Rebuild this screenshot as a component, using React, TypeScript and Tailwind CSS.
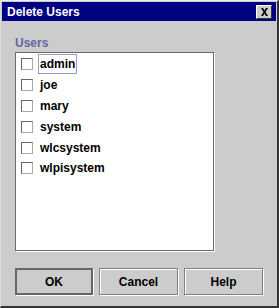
const users = ['admin', 'joe', 'mary', 'system', 'wlcsystem', 'wlpisystem'];

function Button({ label, isDefault }: { label: string; isDefault?: boolean }) {
  return (
    <button
      className={`h-[27px] flex items-center justify-center bg-[#cccccc] text-[12px] font-bold text-black ${
        isDefault
          ? 'w-[78px] border-2 border-[#666666] shadow-[1px_1px_0_#ffffff]'
          : 'w-[79px] border border-[#808080] shadow-[inset_1px_1px_0_#ffffff,1px_1px_0_#ffffff]'
      }`}
    >
      {label}
    </button>
  );
}

export default function App() {
  return (
    <div
      className="w-[279px] h-[308px] bg-[#cccccc] border-t border-l border-t-[#eeeeee] border-l-[#dddddd] border-r-2 border-b-2 border-r-[#333333] border-b-[#333333] flex flex-col"
      style={{ fontFamily: '"Liberation Sans", Arial, sans-serif' }}
    >
      <div className="mx-[1px] mt-[1px] h-[19px] bg-[#000080] flex items-center justify-between pl-[5px] pr-[4px]">
        <span className="text-white text-[12px] font-bold leading-none">Delete Users</span>
        <div className="w-[16px] h-[14px] bg-[#cccccc] border border-t-white border-l-white border-r-[#333333] border-b-[#333333] flex items-center justify-center">
          <svg width="9" height="8" viewBox="0 0 9 8">
            <path d="M1 0h2l1.5 2.5L6 0h2L5.5 4 8 8H6L4.5 5.5 3 8H1l2.5-4z" fill="#000" />
          </svg>
        </div>
      </div>

      <div className="pl-[14px] pt-[15px] flex flex-col">
        <div className="text-[12px] font-bold text-[#6666a0] leading-[14px] h-[14px]">Users</div>
        <div className="mt-[2px] w-[199px] h-[199px] bg-white border border-[#6a6a6a] shadow-[1px_1px_0_#ffffff] pt-[1px]">
          {users.map((u, i) => (
            <div key={u} className="h-[20.8px] flex items-center pl-[5px]">
              <div className="w-[12px] h-[12px] bg-white border border-t-[#666666] border-l-[#666666] border-r-[#aaaaaa] border-b-[#aaaaaa]" />
              <span
                className={`ml-[5px] text-[12px] font-bold text-black leading-none px-[1px] py-[3px] ${
                  i === 0 ? 'border border-[#9999cc]' : 'border border-transparent'
                }`}
              >
                {u}
              </span>
            </div>
          ))}
        </div>
      </div>

      <div className="mt-[17px] pl-[14px] flex gap-[6px]">
        <Button label="OK" isDefault />
        <Button label="Cancel" />
        <Button label="Help" />
      </div>
    </div>
  );
}
